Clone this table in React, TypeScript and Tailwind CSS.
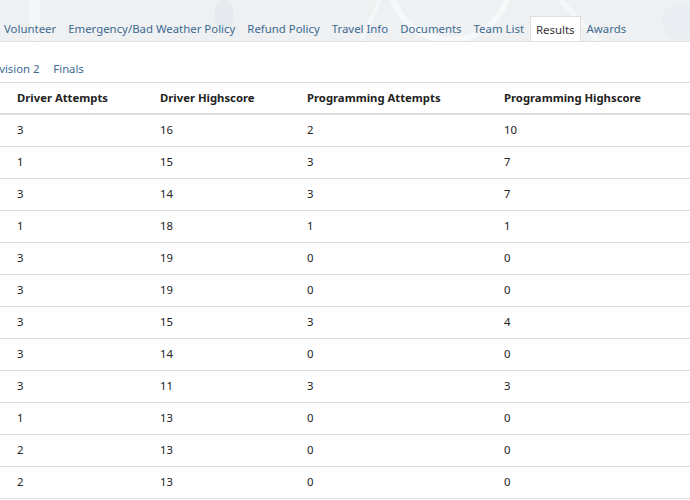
const tabs = [
  "Volunteer",
  "Emergency/Bad Weather Policy",
  "Refund Policy",
  "Travel Info",
  "Documents",
  "Team List",
  "Results",
  "Awards",
];

const rows: [number, number, number, number][] = [
  [3, 16, 2, 10],
  [1, 15, 3, 7],
  [3, 14, 3, 7],
  [1, 18, 1, 1],
  [3, 19, 0, 0],
  [3, 19, 0, 0],
  [3, 15, 3, 4],
  [3, 14, 0, 0],
  [3, 11, 3, 3],
  [1, 13, 0, 0],
  [2, 13, 0, 0],
  [2, 13, 0, 0],
];

export default function App() {
  return (
    <div
      className="w-[690px] h-[500px] overflow-hidden bg-white text-[11.3px] leading-[16px] text-[#222]"
      style={{ fontFamily: "'Noto Sans', Tahoma, sans-serif" }}
    >
      {/* Top tab band */}
      <div className="relative h-[42px] bg-[#eef0f2] border-b border-[#dcdfe3] overflow-hidden">
        {/* faint watermark */}
        <svg className="absolute inset-0" width="690" height="42" viewBox="0 0 690 42">
          <circle cx="450" cy="-20" r="60" fill="none" stroke="#f7f8f9" strokeWidth="6" />
          <rect x="30" y="0" width="10" height="42" fill="#f5f6f7" />
          <rect x="215" y="0" width="18" height="30" rx="9" fill="#e6e9ee" />
          <path d="M560 0 L600 42" stroke="#f6f7f8" strokeWidth="5" />
          <path d="M380 0 L360 42" stroke="#f6f7f8" strokeWidth="4" />
          <circle cx="680" cy="22" r="18" fill="#eaedf2" />
        </svg>
        <div className="relative flex items-end h-full ml-[-2px] whitespace-nowrap text-[11.4px]">
          {tabs.map((t) =>
            t === "Results" ? (
              <div
                key={t}
                className="px-[5px] h-[26px] mb-[-1px] pt-[5px] bg-white border border-[#dcdfe3] border-b-white text-[#333]"
              >
                {t}
              </div>
            ) : (
              <div key={t} className="px-[6px] h-[25px] pt-[5px] text-[#3d6a91]">
                {t}
              </div>
            )
          )}
        </div>
      </div>

      {/* Sub tabs */}
      <div className="flex h-[41px] pt-[19px] ml-[-19px] text-[#3d6a91] border-b border-[#dddddd] whitespace-nowrap">
        <span className="px-[7px]">Division 2</span>
        <span className="px-[7px]">Finals</span>
      </div>

      {/* Results table */}
      <table className="w-[700px] border-collapse table-fixed">
        <thead>
          <tr className="border-b-2 border-[#dddddd]">
            <th className="w-[160px] pl-[17px] h-[31px] text-left font-bold">Driver Attempts</th>
            <th className="w-[147px] h-[31px] text-left font-bold">Driver Highscore</th>
            <th className="w-[197px] h-[31px] text-left font-bold">Programming Attempts</th>
            <th className="h-[31px] text-left font-bold">Programming Highscore</th>
          </tr>
        </thead>
        <tbody>
          {rows.map((r, i) => (
            <tr key={i} className="border-b border-[#dddddd]">
              <td className="pl-[17px] h-[32px]">{r[0]}</td>
              <td className="h-[32px]">{r[1]}</td>
              <td className="h-[32px]">{r[2]}</td>
              <td className="h-[32px]">{r[3]}</td>
            </tr>
          ))}
        </tbody>
      </table>
    </div>
  );
}
